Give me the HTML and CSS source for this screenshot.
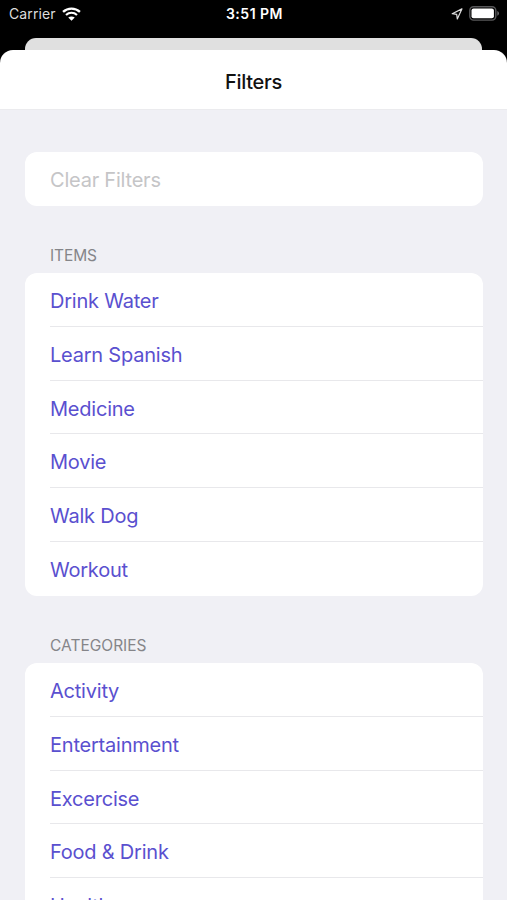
FILE: index.html
```html
<!DOCTYPE html>
<html lang="en">
<head>
  <meta charset="UTF-8" />
  <meta name="viewport" content="width=device-width, initial-scale=1.0"/>
  <title>Filters</title>
  <link rel="stylesheet" href="styles.css">
</head>
<body>
  <div class="status-bar">
    <div class="status-left">
      <span class="carrier">Carrier</span>
      <svg class="wifi" width="19" height="14" viewBox="0 0 18 14" preserveAspectRatio="none">
        <path d="M1 4.9C5.5 0.6 12.5 0.6 17 4.9" fill="none" stroke="#fff" stroke-width="2.2"/>
        <path d="M3.8 7.9C6.8 5.1 11.2 5.1 14.2 7.9" fill="none" stroke="#fff" stroke-width="2.1"/>
        <path d="M9 13.7L5.9 10.6C7.7 9 10.3 9 12.1 10.6Z" fill="#fff"/>
      </svg>
    </div>
    <div class="time">3:51 PM</div>
    <div class="status-right">
      <svg class="location" width="12" height="12" viewBox="0 0 12 12">
        <path d="M10.9 0.9L1.2 5.7L5.7 6.3L6.3 10.9Z" fill="none" stroke="#ddd" stroke-width="1.2" stroke-linejoin="round"/>
      </svg>
      <svg class="battery" width="31" height="15" viewBox="0 0 31 15">
        <rect x="0.8" y="0.7" width="26" height="13.4" rx="3.8" fill="none" stroke="#58585a" stroke-width="1.4"/>
        <rect x="2.5" y="2.5" width="22.4" height="9.8" rx="2" fill="#fff"/>
        <path d="M28.3 5V9.8C30.6 8.9 30.6 5.9 28.3 5Z" fill="#68686a"/>
      </svg>
    </div>
  </div>

  <div class="back-sheet"></div>

  <div class="sheet">
    <h1 class="title">Filters</h1>

    <div class="content">
      <ul class="card">
        <li class="row disabled">Clear Filters</li>
      </ul>

      <h2 class="section-title">ITEMS</h2>
      <ul class="card">
        <li class="row">Drink Water</li>
        <li class="row">Learn Spanish</li>
        <li class="row">Medicine</li>
        <li class="row">Movie</li>
        <li class="row">Walk Dog</li>
        <li class="row">Workout</li>
      </ul>

      <h2 class="section-title categories">CATEGORIES</h2>
      <ul class="card">
        <li class="row">Activity</li>
        <li class="row">Entertainment</li>
        <li class="row">Excercise</li>
        <li class="row">Food &amp; Drink</li>
        <li class="row">Health</li>
      </ul>
    </div>
  </div>
</body>
</html>
```

FILE: styles.css
```css
* {
  box-sizing: border-box;
}
body {
  font-family: Inter, "Liberation Sans", sans-serif;
  background-color: #000;
  margin: 0;
  height: 900px;
  overflow: hidden;
  display: flex;
  flex-direction: column;
}
.status-bar {
  flex: none;
  height: 38px;
  padding: 0 7px 0 9px;
  display: grid;
  grid-template-columns: 1fr auto 1fr;
  color: #fff;
  font-size: 14px;
  line-height: 28px;
}
.status-left, .status-right {
  display: flex;
  align-items: center;
  height: 27px;
}
.status-left {
  gap: 6px;
}
.status-right {
  justify-content: flex-end;
  gap: 6px;
}
.carrier {
  color: #ddd;
  letter-spacing: 0.1px;
}
.time {
  font-weight: 600;
  letter-spacing: 0.5px;
}
.back-sheet {
  flex: none;
  height: 12px;
  margin: 0 25px;
  background-color: #e0e0e0;
  border-radius: 11px 11px 0 0;
}
.sheet {
  flex: 1;
  min-height: 0;
  display: flex;
  flex-direction: column;
  overflow: hidden;
  background-color: #fff;
  border-radius: 13px 13px 0 0;
}
.title {
  flex: none;
  height: 60px;
  margin: 0;
  border-bottom: 1px solid #ebebee;
  text-align: center;
  font-size: 20px;
  font-weight: 450;
  line-height: 65px;
  letter-spacing: -0.3px;
  color: #111;
}
.content {
  flex: 1;
  min-height: 0;
  padding: 42px 24.5px 0 25px;
  background-color: #f0f0f5;
}
.card {
  margin: 0;
  padding: 0 0 0 25px;
  list-style: none;
  background-color: #fff;
  border-radius: 12px;
}
.row {
  height: 53.8px;
  font-size: 20px;
  line-height: 56px;
  letter-spacing: -0.22px;
  color: #5a50cf;
  border-bottom: 1px solid #e8e8eb;
}
.row:last-child {
  border-bottom: none;
}
.row.disabled {
  color: #c5c5c7;
}
.section-title {
  height: 67.2px;
  margin: 0;
  padding: 40px 0 0 25px;
  font-size: 15.5px;
  font-weight: 400;
  line-height: 20px;
  letter-spacing: -0.1px;
  color: #858589;
}
.section-title.categories {
  letter-spacing: 0;
}
```
